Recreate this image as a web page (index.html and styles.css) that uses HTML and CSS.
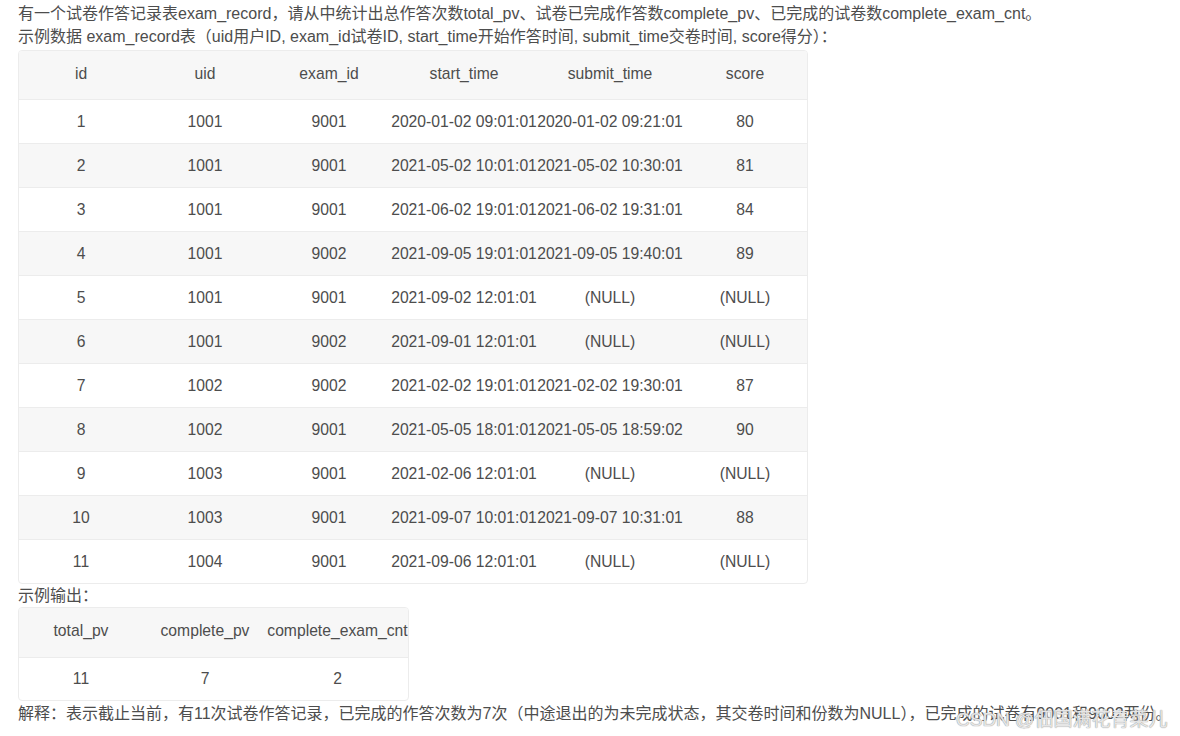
FILE: index.html
```html
<!DOCTYPE html>
<html lang="zh-CN">
<head>
<meta charset="utf-8">
<title>exam_record</title>
<link rel="stylesheet" href="styles.css">
</head>
<body>
<div class="content">
  <p class="line">有一个试卷作答记录表exam_record，请从中统计出总作答次数total_pv、试卷已完成作答数complete_pv、已完成的试卷数complete_exam_cnt。</p>
  <p class="line">示例数据 exam_record表（uid用户ID, exam_id试卷ID, start_time开始作答时间, submit_time交卷时间, score得分）：</p>
  <table class="data big">
    <thead>
      <tr><th class="c-n">id</th><th class="c-n">uid</th><th class="c-n">exam_id</th><th class="c-t">start_time</th><th class="c-t">submit_time</th><th class="c-n">score</th></tr>
    </thead>
    <tbody>
      <tr><td>1</td><td>1001</td><td>9001</td><td>2020-01-02 09:01:01</td><td>2020-01-02 09:21:01</td><td>80</td></tr>
      <tr><td>2</td><td>1001</td><td>9001</td><td>2021-05-02 10:01:01</td><td>2021-05-02 10:30:01</td><td>81</td></tr>
      <tr><td>3</td><td>1001</td><td>9001</td><td>2021-06-02 19:01:01</td><td>2021-06-02 19:31:01</td><td>84</td></tr>
      <tr><td>4</td><td>1001</td><td>9002</td><td>2021-09-05 19:01:01</td><td>2021-09-05 19:40:01</td><td>89</td></tr>
      <tr><td>5</td><td>1001</td><td>9001</td><td>2021-09-02 12:01:01</td><td>(NULL)</td><td>(NULL)</td></tr>
      <tr><td>6</td><td>1001</td><td>9002</td><td>2021-09-01 12:01:01</td><td>(NULL)</td><td>(NULL)</td></tr>
      <tr><td>7</td><td>1002</td><td>9002</td><td>2021-02-02 19:01:01</td><td>2021-02-02 19:30:01</td><td>87</td></tr>
      <tr><td>8</td><td>1002</td><td>9001</td><td>2021-05-05 18:01:01</td><td>2021-05-05 18:59:02</td><td>90</td></tr>
      <tr><td>9</td><td>1003</td><td>9001</td><td>2021-02-06 12:01:01</td><td>(NULL)</td><td>(NULL)</td></tr>
      <tr><td>10</td><td>1003</td><td>9001</td><td>2021-09-07 10:01:01</td><td>2021-09-07 10:31:01</td><td>88</td></tr>
      <tr><td>11</td><td>1004</td><td>9001</td><td>2021-09-06 12:01:01</td><td>(NULL)</td><td>(NULL)</td></tr>
    </tbody>
  </table>
  <p class="line">示例输出：</p>
  <table class="data small">
    <thead>
      <tr><th class="c-n">total_pv</th><th class="c-n">complete_pv</th><th class="c-w">complete_exam_cnt</th></tr>
    </thead>
    <tbody>
      <tr><td>11</td><td>7</td><td>2</td></tr>
    </tbody>
  </table>
  <p class="line">解释：表示截止当前，有11次试卷作答记录，已完成的作答次数为7次（中途退出的为未完成状态，其交卷时间和份数为NULL），已完成的试卷有9001和9002两份。</p>
</div>
<div class="watermark">CSDN @佃国满花青菜儿</div>
</body>
</html>
```

FILE: styles.css
```css
html, body {
  margin: 0;
  padding: 0;
  background: #ffffff;
}
body {
  font-family: "Liberation Sans", Arial, "Noto Sans CJK SC", sans-serif;
  font-size: 16px;
  color: #4d4d4d;
}
.content {
  padding: 2px 0 0 18px;
}
.line {
  margin: 0;
  line-height: 23px;
  white-space: nowrap;
}
.data {
  border-collapse: separate;
  border-spacing: 0;
  border: 1px solid #ececec;
  border-radius: 4px;
  table-layout: fixed;
  overflow: hidden;
  font-size: 15.7px;
}
.big { margin: 2px 0 0 0; }
.small { margin: 0 0 1px 0; }
.data th, .data td {
  padding: 0;
  text-align: center;
  font-weight: normal;
  white-space: nowrap;
}
.data th {
  background: #f7f7f7;
  height: 45px;
  padding-bottom: 3px;
  border-bottom: 1px solid #ececec;
}
.data td {
  height: 43px;
  border-top: 1px solid #ececec;
}
.data tbody tr:first-child td {
  border-top: none;
}
.data tbody tr:nth-child(even) td {
  background: #f7f7f7;
}
.c-n { width: 124px; }
.c-t { width: 146px; }
.c-w { width: 141px; }
.small th { height: 46px; }
.small td { height: 42px; }
.watermark {
  position: absolute;
  left: 956px;
  top: 704px;
  font-family: "Liberation Sans", "Noto Sans CJK SC", sans-serif;
  font-size: 19px;
  color: rgba(255,255,255,0.75);
  text-shadow: 0 0 1px #9a9a9a, 0 0 1px #9a9a9a;
  white-space: nowrap;
}
```
